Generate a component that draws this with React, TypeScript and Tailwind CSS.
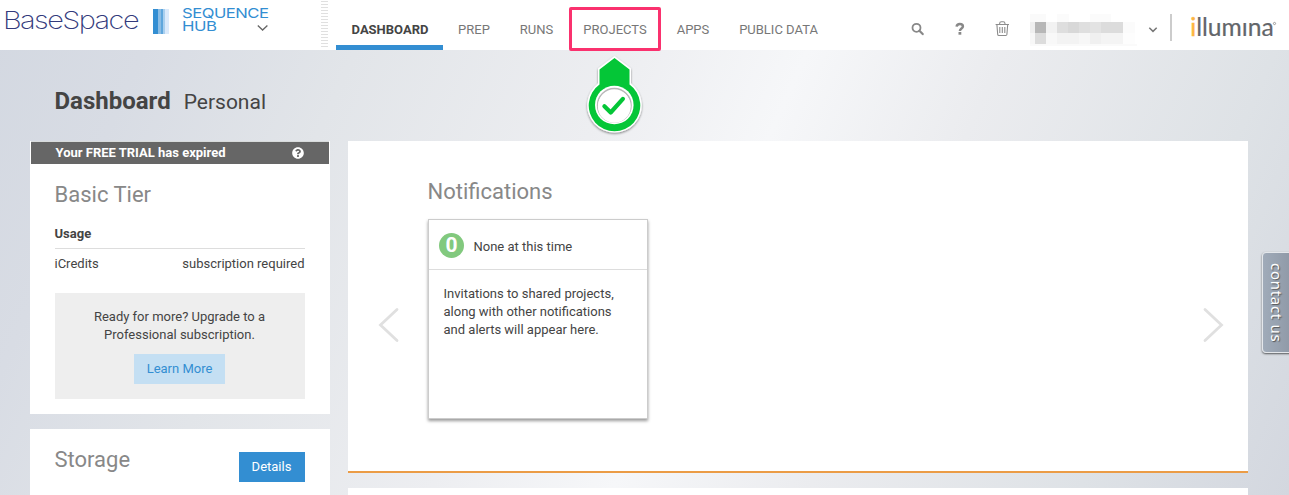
import React from "react";
import { FaQuestionCircle } from "react-icons/fa";

const navItems = [
  { label: "PREP", cls: "w-[62px]" },
  { label: "RUNS", cls: "w-[63px]" },
  { label: "PROJECTS", cls: "w-[94px]" },
  { label: "APPS", cls: "w-[62px]" },
  { label: "PUBLIC DATA", cls: "w-[109px]" },
];

function Logo() {
  return (
    <svg width="320" height="50" viewBox="0 0 320 50" className="shrink-0">
      <text x="3" y="29.2" textLength="135" lengthAdjust="spacingAndGlyphs" letterSpacing="-1.3" fontSize="24" fontWeight="250" fill="#333a7c" fontFamily="Inter, sans-serif">BaseSpace</text>
      <rect x="153" y="9" width="5" height="25" fill="#338ed2" />
      <rect x="158" y="9" width="3" height="25" fill="#8abce4" />
      <rect x="161" y="9" width="2" height="25" fill="#5fa6dc" />
      <rect x="163" y="9" width="2" height="25" fill="#a9cfee" />
      <rect x="165" y="9" width="4" height="25" fill="#dbeafb" />
      <g fontFamily="Inter, sans-serif" fontSize="13.6" fill="#338ed2" letterSpacing="-0.4">
        <text x="182" y="18" textLength="86.5" lengthAdjust="spacingAndGlyphs">SEQUENCE</text>
        <text x="182" y="31.2" textLength="34.5" lengthAdjust="spacingAndGlyphs">HUB</text>
      </g>
      <path d="M257.8 25.5l4.8 4.5 4.8-4.5" fill="none" stroke="#666" strokeWidth="1.3" />
    </svg>
  );
}

function Handle() {
  return (
    <svg width="9" height="50" className="shrink-0">
      {Array.from({ length: 16 }, (_, i) => (
        <rect key={i} x="1" y={1 + i * 3} width="7" height="1" fill="#e0e0e0" />
      ))}
    </svg>
  );
}

const mosaic: [number, number, number, number, string][] = [
  [0, 0, 16, 8, "#fafafa"], [27, 0, 12, 8, "#fbfbfb"], [60, 0, 21, 8, "#fbfbfb"],
  [0, 8, 5, 11, "#efefef"], [5, 8, 11, 11, "#b7b7b7"], [16, 8, 11, 11, "#f2f2f2"],
  [27, 8, 11, 11, "#dedede"], [38, 8, 11, 11, "#d8d8d8"], [49, 8, 11, 11, "#dfdfdf"],
  [60, 8, 11, 11, "#e3e3e3"], [71, 8, 22, 11, "#dcdcdc"], [93, 8, 12, 11, "#fbfbfb"],
  [0, 19, 5, 11, "#f7f7f7"], [5, 19, 11, 11, "#dcdcdc"], [16, 19, 11, 11, "#f8f8f8"],
  [27, 19, 22, 11, "#f3f3f3"], [49, 19, 11, 11, "#f7f7f7"], [60, 19, 11, 11, "#f0f0f0"],
  [71, 19, 22, 11, "#f4f4f4"], [93, 19, 12, 11, "#fdfdfd"], [0, 30, 107, 2, "#fafafa"],
];

function Tools() {
  return (
    <svg width="389" height="50" viewBox="900 0 389 50" className="shrink-0">
      <g fill="none" stroke="#888" strokeWidth="1.8">
        <circle cx="916.5" cy="27.8" r="4" />
        <path d="M919.4 30.7l3.3 3.4" strokeWidth="2.2" strokeLinecap="round" />
      </g>
      <g fill="none" stroke="#888">
        <path d="M956.6 26.6c.3-1.9 1.5-2.6 3.2-2.6 2 0 3.1 1 3.1 2.4 0 2.1-3 2.1-3 4.5" strokeWidth="2.5" />
        <path d="M959.9 32v2.7" strokeWidth="2.8" />
      </g>
      <g fill="none" stroke="#8c8c8c" strokeWidth="1.1">
        <path d="M995.6 24.5h13.4M996.9 24.5l.8 10q.1 1 1.2 1h6.8q1.1 0 1.2-1l.8-10M999.6 24.5v-.8q0-1.9 1.8-1.9h1.8q1.8 0 1.8 1.9v.8M999.8 27v6M1002.3 27v6M1004.8 27v6" />
      </g>
      <g transform="translate(1030 14)">
        {mosaic.map(([x, y, w, h, c], i) => (
          <rect key={i} x={x} y={y} width={w} height={h} fill={c} shapeRendering="crispEdges" />
        ))}
      </g>
      <path d="M1149.3 27.7l3.7 3.7 3.7-3.7" fill="none" stroke="#777" strokeWidth="1.5" />
      <rect x="1170" y="14" width="2" height="27" fill="#ccc" />
      <text x="1190.3" y="35.8" textLength="83.5" lengthAdjust="spacingAndGlyphs" fontFamily="Lato, sans-serif" fontSize="25" fill="#63666a" stroke="#63666a" strokeWidth="0.2">
        <tspan fill="#fdb541" stroke="#fdb541" strokeWidth="0.5">i</tspan>llumına
      </text>
      <circle cx="1274.5" cy="23.5" r="1.1" fill="none" stroke="#888" strokeWidth="0.8" />
    </svg>
  );
}

function Marker() {
  return (
    <svg className="absolute left-[580px] top-[50px] z-10" width="70" height="90" viewBox="580 50 70 90">
      <defs>
        <filter id="shadow" x="-20%" y="-20%" width="140%" height="140%">
          <feDropShadow dx="0" dy="1.2" stdDeviation="1" floodOpacity="0.45" />
        </filter>
      </defs>
      <path filter="url(#shadow)" fill="#fff" d="M614.5 56L631 68.5V83.5A27.3 27.3 0 1 1 598 83.5V68.5Z" />
      <path fill="#04c637" d="M614.5 58L629.5 69.5V84.5A25.8 25.8 0 1 1 599.5 84.5V69.5Z" />
      <circle cx="614.3" cy="105" r="19.3" fill="#fff" />
      <circle cx="614.3" cy="105.3" r="16.8" fill="#fff" stroke="#b8b8b8" strokeWidth="1.4" />
      <circle cx="614.3" cy="106.4" r="16.4" fill="#fff" />
      <path d="M604.4 106.2l6.3 6.3 12.2-13.6" fill="none" stroke="#04c637" strokeWidth="4.2" strokeLinecap="round" strokeLinejoin="round" />
    </svg>
  );
}

function Arrow({ d }: { d: string }) {
  return (
    <svg width="22" height="36" viewBox="0 0 22 36" className="shrink-0">
      <path d={d} fill="none" stroke="#e0e0e0" strokeWidth="2.8" strokeLinecap="round" />
    </svg>
  );
}

export default function App() {
  return (
    <div className="relative flex h-[495px] w-[1289px] flex-col overflow-hidden bg-[linear-gradient(114deg,#d3d8e1_0%,#d8dce4_11%,#e2e5e9_25%,#edeef1_43%,#f6f7f9_55%,#ebecef_68%,#dee2e6_86%,#d3d7df_100%)] font-['Roboto',sans-serif] text-[13px] leading-[18px] text-[#444]">
      <header className="flex h-[50px] shrink-0 bg-white">
        <Logo />
        <Handle />
        <nav className="ml-[7px] flex h-[50px] text-[#777]">
          <div className="flex w-[107px] justify-center border-b-[5px] border-[#338ed2] pl-px pt-[21px] font-bold text-[#444]">DASHBOARD</div>
          {navItems.map((n) => (
            <div key={n.label} className={"flex justify-center pt-[21px] " + n.cls}>
              <span className="whitespace-nowrap">{n.label}</span>
            </div>
          ))}
        </nav>
        <div className="grow" />
        <Tools />
      </header>
      <div className="absolute left-[569px] top-[7px] h-[44px] w-[92px] rounded-[2px] border-[3px] border-[#fa316e]" />
      <Marker />

      <div className="flex h-[91px] shrink-0 items-baseline gap-[13px] pl-[54.5px] pt-[36px] text-[#444]">
        <h1 className="text-[24px] font-bold leading-[30px]">Dashboard</h1>
        <span className="text-[21px]">Personal</span>
      </div>

      <div className="flex gap-[18px] pl-[30px]">
        <aside className="flex w-[300px] flex-col gap-[15px]">
          <section className="h-[273px] bg-white">
            <div className="mx-px flex h-[23px] items-center justify-between border-t border-[#d8dbdb] bg-[#666] pl-[24.5px] pr-[25px] font-bold text-white">
              <span>Your FREE TRIAL has expired</span>
              <FaQuestionCircle size={12} className="-mt-px" />
            </div>
            <div className="pl-[24.5px] pr-[25px]">
              <h2 className="pt-[17px] text-[22px] leading-[28px] text-[#888]">Basic Tier</h2>
              <div className="mt-[15px] h-[25px] border-b border-[#ddd] pt-px font-bold">Usage</div>
              <div className="flex justify-between pr-[0.5px] pt-[6px]">
                <span>iCredits</span>
                <span>subscription required</span>
              </div>
              <div className="ml-[0.5px] mt-[20px] flex h-[106px] flex-col items-center bg-[#eee] pr-px pt-[15px] text-center">
                <p className="whitespace-nowrap">Ready for more? Upgrade to a<br />Professional subscription.</p>
                <button className="mt-[10px] h-[30px] w-[91px] bg-[#c4dff3] text-[#338ed2]">Learn More</button>
              </div>
            </div>
          </section>
          <section className="flex h-[90px] justify-between bg-white pl-[24.5px] pr-[25px]">
            <h2 className="pt-[17px] text-[22px] leading-[28px] text-[#888]">Storage</h2>
            <button className="mt-[23px] h-[30px] w-[66px] bg-[#338ed2] pr-px text-white">Details</button>
          </section>
        </aside>

        <main className="flex w-[900px] flex-col gap-[15px]">
          <section className="flex h-[332px] border-b-2 border-[#eb9c46] bg-white">
            <div className="w-[80px] pl-[30px] pt-[166px]">
              <Arrow d="M19 2.5L2.5 18L19 33.5" />
            </div>
            <div className="grow">
              <h2 className="-ml-[0.5px] pt-[37px] text-[22px] leading-[28px] text-[#888]">Notifications</h2>
              <div className="mt-[13px] h-[200px] w-[220px] border border-[#ccc] bg-white shadow-[0_2px_3px_rgba(0,0,0,0.4)]">
                <div className="flex h-[50px] items-center gap-[9.5px] border-b border-[#ddd] pl-[10px] pt-[3px]">
                  <span className="-mt-[2px] flex size-[25px] items-center justify-center rounded-full bg-[#82c97e] text-[21px] font-bold text-white">0</span>
                  <span className="pt-px">None at this time</span>
                </div>
                <p className="whitespace-nowrap pl-[14.5px] pt-[15px]">Invitations to shared projects,<br />along with other notifications<br />and alerts will appear here.</p>
              </div>
            </div>
            <div className="w-[46px] pt-[166px]">
              <Arrow d="M3 2.5L19.5 18L3 33.5" />
            </div>
          </section>
          <section className="h-[20px] bg-white" />
        </main>
      </div>

      <div className="absolute left-[1262px] top-[252px] flex h-[101px] w-[32px] items-center justify-center rounded-[4px] border border-[#e4e7eb] bg-gradient-to-r from-[#a0abb9] to-[#8e98a6] pr-[3px] pt-px shadow-[0_1px_2px_rgba(0,0,0,0.6)]">
        <span className="whitespace-nowrap font-['Noto_Sans',sans-serif] text-[15px] tracking-[0.7px] text-white [text-shadow:1px_-1px_1px_#555] [writing-mode:vertical-rl]">contact us</span>
      </div>
    </div>
  );
}
